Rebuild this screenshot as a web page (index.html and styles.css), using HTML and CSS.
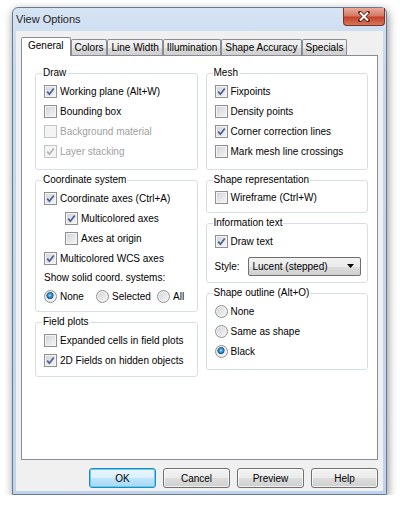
FILE: index.html
```html
<!DOCTYPE html>
<html lang="en">
<head>
    <meta charset="UTF-8">
    <title>View Options</title>
    <link rel="stylesheet" href="styles.css">
</head>
<body>
    <div class="window">
        <div class="titlebar">
            <span class="title">View Options</span>
            <span class="close">
                <svg width="14" height="11" viewBox="0 0 14 11"><path d="M3 1.5 L11 9.5 M11 1.5 L3 9.5" stroke="#5a1c12" stroke-width="3.6" stroke-linecap="round"/><path d="M3 1.5 L11 9.5 M11 1.5 L3 9.5" stroke="#ffffff" stroke-width="2"/></svg>
            </span>
        </div>
        <div class="client">
            <div class="tabs">
                <span class="tab active">General</span>
                <span class="tab">Colors</span>
                <span class="tab">Line Width</span>
                <span class="tab">Illumination</span>
                <span class="tab">Shape Accuracy</span>
                <span class="tab">Specials</span>
            </div>
            <div class="panel">
                <div class="col">
                    <fieldset class="group">
                        <legend>Draw</legend>
                        <label class="row"><span class="cb"><svg viewBox="0 0 11 11"><path d="M2.2 5.6 L4.4 8.2 L8.8 2.4"/></svg></span>Working plane (Alt+W)</label>
                        <label class="row"><span class="cb"></span>Bounding box</label>
                        <label class="row disabled"><span class="cb"></span>Background material</label>
                        <label class="row disabled"><span class="cb"><svg viewBox="0 0 11 11"><path d="M2.2 5.6 L4.4 8.2 L8.8 2.4"/></svg></span>Layer stacking</label>
                    </fieldset>
                    <fieldset class="group coord">
                        <legend>Coordinate system</legend>
                        <label class="row"><span class="cb"><svg viewBox="0 0 11 11"><path d="M2.2 5.6 L4.4 8.2 L8.8 2.4"/></svg></span>Coordinate axes (Ctrl+A)</label>
                        <label class="row sub"><span class="cb"><svg viewBox="0 0 11 11"><path d="M2.2 5.6 L4.4 8.2 L8.8 2.4"/></svg></span>Multicolored axes</label>
                        <label class="row sub"><span class="cb"></span>Axes at origin</label>
                        <label class="row"><span class="cb"><svg viewBox="0 0 11 11"><path d="M2.2 5.6 L4.4 8.2 L8.8 2.4"/></svg></span>Multicolored WCS axes</label>
                        <div class="row caption">Show solid coord. systems:</div>
                        <div class="row radios">
                            <label class="opt opt-none"><span class="rb on"></span>None</label>
                            <label class="opt opt-sel"><span class="rb"></span>Selected</label>
                            <label class="opt"><span class="rb"></span>All</label>
                        </div>
                    </fieldset>
                    <fieldset class="group fields">
                        <legend>Field plots</legend>
                        <label class="row"><span class="cb"></span>Expanded cells in field plots</label>
                        <label class="row"><span class="cb"><svg viewBox="0 0 11 11"><path d="M2.2 5.6 L4.4 8.2 L8.8 2.4"/></svg></span>2D Fields on hidden objects</label>
                    </fieldset>
                </div>
                <div class="col">
                    <fieldset class="group">
                        <legend>Mesh</legend>
                        <label class="row"><span class="cb"><svg viewBox="0 0 11 11"><path d="M2.2 5.6 L4.4 8.2 L8.8 2.4"/></svg></span>Fixpoints</label>
                        <label class="row"><span class="cb"></span>Density points</label>
                        <label class="row"><span class="cb"><svg viewBox="0 0 11 11"><path d="M2.2 5.6 L4.4 8.2 L8.8 2.4"/></svg></span>Corner correction lines</label>
                        <label class="row"><span class="cb"></span>Mark mesh line crossings</label>
                    </fieldset>
                    <fieldset class="group shape">
                        <legend>Shape representation</legend>
                        <label class="row"><span class="cb"></span>Wireframe (Ctrl+W)</label>
                    </fieldset>
                    <fieldset class="group info">
                        <legend>Information text</legend>
                        <label class="row"><span class="cb"><svg viewBox="0 0 11 11"><path d="M2.2 5.6 L4.4 8.2 L8.8 2.4"/></svg></span>Draw text</label>
                        <div class="row style-row">
                            <span class="style-label">Style:</span>
                            <span class="combo">Lucent (stepped)<svg width="7" height="4" viewBox="0 0 7 4"><polygon points="0,0 7,0 3.5,4" fill="#000"/></svg></span>
                        </div>
                    </fieldset>
                    <fieldset class="group">
                        <legend>Shape outline (Alt+O)</legend>
                        <label class="row"><span class="rb"></span>None</label>
                        <label class="row"><span class="rb"></span>Same as shape</label>
                        <label class="row"><span class="rb on"></span>Black</label>
                    </fieldset>
                </div>
            </div>
            <div class="buttons">
                <span class="btn default">OK</span>
                <span class="btn">Cancel</span>
                <span class="btn">Preview</span>
                <span class="btn">Help</span>
            </div>
        </div>
    </div>
</body>
</html>
```

FILE: styles.css
```css
body {
    margin: 0;
    background-color: #ffffff;
    font-family: "Liberation Sans", Arial, sans-serif;
    font-size: 10px;
    color: #000;
}
.window {
    margin: 7px 0 0 12px;
    width: 375px;
    height: 488px;
    box-sizing: border-box;
    border: 1px solid #6b7a8d;
    border-radius: 6px 6px 0 0;
    background: linear-gradient(#d6e4f4, #c3d7ef 60px, #bfd3ec);
    box-shadow: 1px 3px 10px rgba(0, 0, 0, 0.45);
    display: flex;
    flex-direction: column;
}
.titlebar {
    height: 23px;
    display: flex;
    justify-content: space-between;
    align-items: flex-start;
}
.title {
    font-size: 11px;
    padding: 5px 0 0 3px;
    color: #1e1e1e;
}
.close {
    width: 42px;
    height: 18px;
    margin-right: 1px;
    box-sizing: border-box;
    border: 1px solid #7d3326;
    border-top: none;
    border-radius: 0 0 4px 4px;
    background: linear-gradient(#e9a99b 0%, #d67b66 45%, #c4432c 55%, #d4785a 100%);
    display: flex;
    align-items: center;
    justify-content: center;
}
.client {
    flex: 1;
    margin: 0 3px 3px 3px;
    padding: 6px 5px 0 5px;
    background-color: #f0f0f0;
    display: flex;
    flex-direction: column;
}
.tabs {
    height: 18px;
    display: flex;
    align-items: flex-end;
}
.tab {
    height: 16px;
    box-sizing: border-box;
    padding: 0 3px;
    border: 1px solid #898c95;
    border-bottom: none;
    border-radius: 2px 2px 0 0;
    background: linear-gradient(#f2f2f2, #ebebeb 50%, #dddddd 51%, #cfcfcf);
    line-height: 15px;
    white-space: nowrap;
}
.tab.active {
    height: 19px;
    margin-bottom: -1px;
    padding: 0 6px;
    background: #ffffff;
    position: relative;
    z-index: 1;
    line-height: 16px;
}
.panel {
    flex: 1;
    border: 1px solid #898c95;
    background-color: #ffffff;
    padding: 10px 9px 0 13px;
    display: flex;
    gap: 8px;
}
.col {
    flex: 1;
    display: flex;
    flex-direction: column;
    gap: 3px;
}
.group {
    margin: 0;
    padding: 1px 6px 8px 8px;
    border: 1px solid #d5dfe5;
    border-radius: 3px;
    min-width: 0;
}
.group.coord {
    padding-bottom: 5px;
}
.group.fields {
    padding-bottom: 6px;
}
.group.shape {
    padding-top: 0;
    padding-bottom: 5px;
}
.group.info {
    padding-bottom: 4px;
}
.group legend {
    margin-left: -2px;
    padding: 0 1px;
    line-height: 14px;
}
.row {
    height: 20px;
    display: flex;
    align-items: center;
    white-space: nowrap;
}
.row.sub {
    padding-left: 21px;
}
.row.disabled {
    color: #a0a0a0;
}
.row.caption {
    height: 18px;
}
.cb, .rb {
    width: 13px;
    height: 13px;
    box-sizing: border-box;
    border: 1px solid #8e8f8f;
    margin-right: 3px;
    flex-shrink: 0;
    background: linear-gradient(135deg, #cfd2d7, #f7f7f7);
    box-shadow: inset 0 0 0 1px #f4f4f4;
}
.cb svg {
    display: block;
    width: 11px;
    height: 11px;
}
.cb path {
    fill: none;
    stroke: #4a5f90;
    stroke-width: 1.7;
}
.disabled .cb {
    border-color: #c4c4c4;
    background: #f4f4f4;
}
.disabled .cb path {
    stroke: #b4b4b4;
}
.rb {
    border-radius: 50%;
}
.rb.on {
    background: radial-gradient(circle at 45% 40%, #b4e2f8 0, #3e9ad4 1.6px, #1d669c 3px, #1a5a8a 3.4px, transparent 3.8px),
        linear-gradient(135deg, #cfd2d7, #f7f7f7);
}
.opt {
    display: flex;
    align-items: center;
}
.opt-none {
    width: 52px;
}
.opt-sel {
    width: 61px;
}
.style-row {
    height: 24px;
    margin-top: 3px;
}
.style-label {
    width: 33px;
}
.combo {
    width: 113px;
    height: 19px;
    box-sizing: border-box;
    border: 1px solid #707070;
    border-radius: 2px;
    background: linear-gradient(#f2f2f2, #ebebeb 50%, #dddddd 51%, #cfcfcf);
    padding: 0 6px 0 4px;
    display: flex;
    align-items: center;
    justify-content: space-between;
}
.buttons {
    height: 20px;
    margin: 8px 0 3px 0;
    display: flex;
    justify-content: flex-end;
    gap: 7px;
}
.btn {
    width: 67px;
    height: 20px;
    box-sizing: border-box;
    border: 1px solid #707070;
    border-radius: 3px;
    background: linear-gradient(#f2f2f2, #ebebeb 50%, #dddddd 51%, #cfcfcf);
    box-shadow: inset 0 0 0 1px rgba(255, 255, 255, 0.7);
    display: flex;
    align-items: center;
    justify-content: center;
}
.btn.default {
    border-color: #3c7fb1;
    background: linear-gradient(#eaf6fd, #d9f0fc 50%, #bee6fd 51%, #a7d9f5);
    box-shadow: inset 0 0 0 1px #48d7fb;
}
```
